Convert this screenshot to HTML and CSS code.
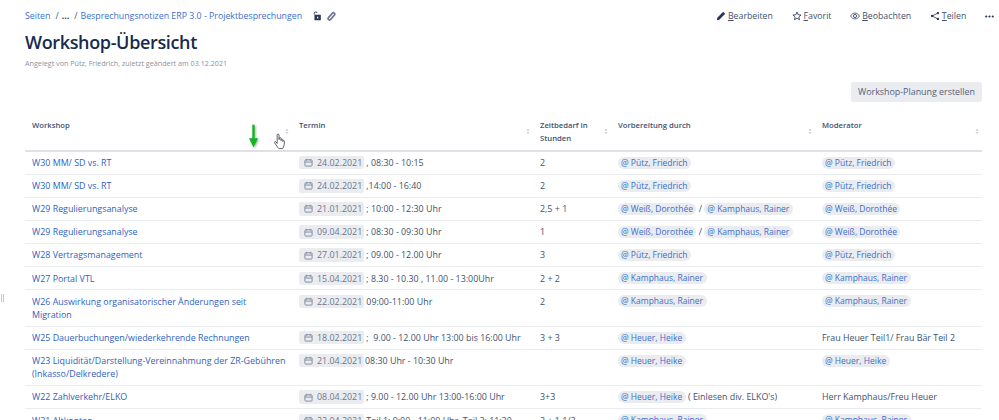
FILE: index.html
```html
<!DOCTYPE html>
<html lang="de">
<head>
<meta charset="utf-8">
<title>Workshop-Übersicht</title>
<link rel="stylesheet" href="styles.css">
</head>
<body>
<svg class="sprites" width="0" height="0" aria-hidden="true">
  <symbol id="cal" viewBox="0 0 10 10"><rect x="1" y="2" width="8" height="7" rx="1" fill="none" stroke="currentColor"/><path d="M1 4.500h8M3 1v2M7 1v2" stroke="currentColor" fill="none"/></symbol>
  <symbol id="sort" viewBox="0 0 6 10"><path d="M3 1 5.200 4H.8zM3 9 .8 6h4.400z" fill="currentColor"/></symbol>
</svg>
<div class="page">
  <header class="top">
    <nav class="crumbs">
      <a>Seiten</a><span class="sep">/</span><span class="dots">...</span><span class="sep">/</span><a>Besprechungsnotizen ERP 3.0 - Projektbesprechungen</a>
      <svg class="ic lock" viewBox="0 0 10 11"><path d="M2 4V2.600a1.600 1.600 0 0 1 3.100-.5" fill="none" stroke="#253858" stroke-width="1.100"/><rect x="2.200" y="4.200" width="7" height="6" rx=".7" fill="#253858"/><rect x="5" y="6.300" width="1.400" height="1.800" fill="#fff"/></svg>
      <svg class="ic clip" viewBox="0 0 10 11"><path d="M2 7.500 6.600 2.200a1.600 1.600 0 0 1 2.400 2L4.600 9.200a1.500 1.500 0 0 1-2.500-1.800L6.200 3" fill="none" stroke="#6b778c" stroke-width="1.800"/></svg>
    </nav>
    <div class="actions">
      <span class="act"><svg class="ic" viewBox="0 0 12 12"><path d="M1 11l.6-3L8 1.600a1 1 0 0 1 1.400 0l1 1a1 1 0 0 1 0 1.400L4 10.400z" fill="#253858"/></svg><span><u>B</u>earbeiten</span></span>
      <span class="act"><svg class="ic" viewBox="0 0 12 12"><path d="M6 1.300 7.400 4.500l3.500.3-2.700 2.300.8 3.400L6 8.700l-3 1.800.8-3.400L1.100 4.800l3.500-.3z" fill="none" stroke="#253858"/></svg><span><u>F</u>avorit</span></span>
      <span class="act"><svg class="ic" viewBox="0 0 12 12"><path d="M.7 6C2 3.700 3.900 2.500 6 2.500S10 3.700 11.300 6C10 8.300 8.100 9.500 6 9.500S2 8.300.7 6z" fill="none" stroke="#253858" stroke-width=".9"/><circle cx="6" cy="6" r="1.900" fill="none" stroke="#253858"/></svg><span><u>B</u>eobachten</span></span>
      <span class="act"><svg class="ic" viewBox="0 0 12 12"><path d="M9.500 2.500 2.500 6l7 3.500" fill="none" stroke="#253858"/><circle cx="9.500" cy="2.500" r="1.400" fill="#253858"/><circle cx="2.500" cy="6" r="1.400" fill="#253858"/><circle cx="9.500" cy="9.500" r="1.400" fill="#253858"/></svg><span><u>T</u>eilen</span></span>
      <svg class="more" viewBox="0 0 9 3"><circle cx="1.200" cy="1.500" r="1.100"/><circle cx="4.500" cy="1.500" r="1.100"/><circle cx="7.800" cy="1.500" r="1.100"/></svg>
    </div>
  </header>
  <h1 class="title">Workshop-Übersicht</h1>
  <p class="meta">Angelegt von Pütz, Friedrich, zuletzt geändert am 03.12.2021</p>
  <div class="tools"><button class="btn">Workshop-Planung erstellen</button></div>
  <table class="grid">
    <colgroup><col class="c1"><col class="c2"><col class="c3"><col class="c4"><col class="c5"></colgroup>
    <thead>
      <tr>
        <th>Workshop<svg class="sort"><use href="#sort"/></svg>
          <svg class="arrow" viewBox="0 0 10 26"><path d="M3.700 0h2.600v15H10l-5 10L0 15h3.700z" fill="#12b51f"/></svg>
          <svg class="hand" viewBox="0 0 14 18"><path d="M4 9V2.200a1 1 0 0 1 2 0V7l.3-1.300a.9.9 0 0 1 1.800.1V8l.2-1a.9.9 0 0 1 1.700.2V9l.2-.6a.8.8 0 0 1 1.500.3c0 2.300-.2 4.500-1 6.300-.3.800-.8 1.500-1.500 1.500H6.500c-.9 0-1.400-.6-2-1.500L1.300 10.500c-.5-1 .6-1.900 1.500-1L4 11z" fill="#fff" stroke="#42464d" stroke-width=".9"/></svg>
        </th>
        <th>Termin<svg class="sort"><use href="#sort"/></svg></th>
        <th>Zeitbedarf in Stunden<svg class="sort"><use href="#sort"/></svg></th>
        <th>Vorbereitung durch<svg class="sort"><use href="#sort"/></svg></th>
        <th>Moderator<svg class="sort"><use href="#sort"/></svg></th>
      </tr>
    </thead>
    <tbody>
      <tr><td><a>W30 MM/ SD vs. RT</a></td><td><span class="date"><svg><use href="#cal"/></svg>24.02.2021</span> , 08:30 - 10:15</td><td>2</td><td><span class="pill">@ Pütz, Friedrich</span></td><td><span class="pill">@ Pütz, Friedrich</span></td></tr>
      <tr><td><a>W30 MM/ SD vs. RT</a></td><td><span class="date"><svg><use href="#cal"/></svg>24.02.2021</span> ,14:00 - 16:40</td><td>2</td><td><span class="pill">@ Pütz, Friedrich</span></td><td><span class="pill">@ Pütz, Friedrich</span></td></tr>
      <tr><td><a>W29 Regulierungsanalyse</a></td><td><span class="date"><svg><use href="#cal"/></svg>21.01.2021</span> ; 10:00 - 12:30 Uhr</td><td>2,5 + 1</td><td><span class="pill">@ Weiß, Dorothée</span> / <span class="pill">@ Kamphaus, Rainer</span></td><td><span class="pill">@ Weiß, Dorothée</span></td></tr>
      <tr><td><a>W29 Regulierungsanalyse</a></td><td><span class="date"><svg><use href="#cal"/></svg>09.04.2021</span> ; 08:30 - 09:30 Uhr</td><td>1</td><td><span class="pill">@ Weiß, Dorothée</span> / <span class="pill">@ Kamphaus, Rainer</span></td><td><span class="pill">@ Weiß, Dorothée</span></td></tr>
      <tr><td><a>W28 Vertragsmanagement</a></td><td><span class="date"><svg><use href="#cal"/></svg>27.01.2021</span> ; 09.00 - 12.00 Uhr</td><td>3</td><td><span class="pill">@ Pütz, Friedrich</span></td><td><span class="pill">@ Pütz, Friedrich</span></td></tr>
      <tr><td><a>W27 Portal VTL</a></td><td><span class="date"><svg><use href="#cal"/></svg>15.04.2021</span> ; 8.30 - 10.30 , 11.00 - 13:00Uhr</td><td>2 + 2</td><td><span class="pill">@ Kamphaus, Rainer</span></td><td><span class="pill">@ Kamphaus, Rainer</span></td></tr>
      <tr><td><a>W26 Auswirkung organisatorischer Änderungen seit<br>Migration</a></td><td><span class="date"><svg><use href="#cal"/></svg>22.02.2021</span> 09:00-11:00 Uhr</td><td>2</td><td><span class="pill">@ Kamphaus, Rainer</span></td><td><span class="pill">@ Kamphaus, Rainer</span></td></tr>
      <tr><td><a>W25 Dauerbuchungen/wiederkehrende Rechnungen</a></td><td><span class="date"><svg><use href="#cal"/></svg>18.02.2021</span> ;&nbsp; 9.00 - 12.00 Uhr 13:00 bis 16:00 Uhr</td><td>3 + 3</td><td><span class="pill">@ Heuer, Heike</span></td><td>Frau Heuer Teil1/ Frau Bär Teil 2</td></tr>
      <tr><td><a>W23 Liquidität/Darstellung-Vereinnahmung der ZR-Gebühren<br>(Inkasso/Delkredere)</a></td><td><span class="date"><svg><use href="#cal"/></svg>21.04.2021</span><span class="tight">08:30 Uhr - 10:30 Uhr</span></td><td></td><td><span class="pill">@ Heuer, Heike</span></td><td><span class="pill">@ Heuer, Heike</span></td></tr>
      <tr><td><a>W22 Zahlverkehr/ELKO</a></td><td><span class="date"><svg><use href="#cal"/></svg>08.04.2021</span> ; 9.00 - 12.00 Uhr 13:00-16:00 Uhr</td><td>3+3</td><td><span class="pill">@ Heuer, Heike</span> ( Einlesen div. ELKO's)</td><td>Herr Kamphaus/Freu Heuer</td></tr>
      <tr><td><a>W21 Altkonten</a></td><td><span class="date"><svg><use href="#cal"/></svg>22.04.2021</span> Teil 1: 9:00 - 11:00 Uhr, Teil 2: 11:30</td><td>2 + 1 1/2</td><td><span class="pill">@ Kamphaus, Rainer</span></td><td><span class="pill">@ Kamphaus, Rainer</span></td></tr>
    </tbody>
  </table>
  <div class="handle"></div>
</div>
</body>
</html>
```

FILE: styles.css
```css
* { box-sizing: border-box; }
html, body { margin: 0; padding: 0; background: #fff; }
.sprites { position: absolute; }
.page {
  position: relative;
  width: 999px;
  height: 420px;
  overflow: hidden;
  padding: 0 17px 0 25px;
  font-family: "Open Sans", "Noto Sans", sans-serif;
  font-size: 8.900px;
  line-height: 13.300px;
  color: #42526e;
}
a { color: #2f62c0; }
.top { display: flex; justify-content: space-between; align-items: center; height: 17px; margin-top: 8px; }
.crumbs { display: flex; align-items: center; font-size: 8.800px; }
.crumbs a { color: #3c6fc9; }
.sep { margin: 0 3px 0 5px; color: #42526e; }
.dots { color: #253858; font-weight: 700; }
.ic { width: 10px; height: 10px; flex: none; }
.lock { margin-left: 10px; }
.clip { margin-left: 4px; }
.actions { display: flex; align-items: center; gap: 18.700px; margin-right: -12px; font-size: 8.750px; color: #42526e; }
.act { display: flex; align-items: center; gap: 2px; }
.more { width: 9px; height: 3px; fill: #253858; }
.title { margin: 4px 0 0; font-size: 18px; line-height: 26px; font-weight: 600; letter-spacing: -.35px; color: #172b4d; }
.meta { margin: 3px 0 0; font-size: 7.200px; line-height: 10px; color: #8a93a3; }
.tools { display: flex; justify-content: flex-end; margin-top: 14px; }
.btn {
  height: 19.500px;
  width: 131px;
  padding: 0;
  border: 0;
  border-radius: 2px;
  background: #ebecf0;
  color: #505f79;
  font: 8.900px "Open Sans", "Noto Sans", sans-serif;
}
.grid { width: 957px; margin-top: 12.500px; border-collapse: collapse; table-layout: fixed; }
.c1 { width: 267px; }
.c2 { width: 241px; }
.c3 { width: 78px; }
.c4 { width: 204px; }
.c5 { width: 167px; }
th {
  position: relative;
  height: 36px;
  padding: 4.600px 14px 4.600px 7px;
  border-bottom: 2px solid #dfe1e6;
  text-align: left;
  vertical-align: top;
  font-size: 7.700px;
  font-weight: 600;
  color: #42526e;
}
.sort { position: absolute; right: 3px; top: 14px; width: 4px; height: 7px; color: #c1c7d0; }
.arrow { position: absolute; left: 224px; top: 10px; width: 9px; height: 25px; filter: drop-shadow(1px 1px 1px #9aa); }
.hand { position: absolute; left: 248px; top: 19px; width: 14px; height: 17px; }
td {
  padding: 4.400px 7px;
  border-bottom: 1px solid #ebecf0;
  vertical-align: top;
}
td:first-child { padding-right: 0; white-space: nowrap; }
td:nth-child(2) { white-space: nowrap; }
.date {
  display: inline-flex;
  vertical-align: top;
  align-items: center;
  gap: 4px;
  width: 65px;
  height: 13.300px;
  padding-left: 5px;
  border-radius: 2px;
  background: #ebecf0;
  color: #6b778c;
}
.date svg { width: 9px; height: 9px; color: #7a869a; }
.tight { margin-left: 1px; }
.pill {
  display: inline-block;
  vertical-align: top;
  height: 12px;
  margin-top: .7px;
  margin-left: -.5px;
  padding: 0 3.500px;
  font-size: 8.500px;
  line-height: 12px;
  border-radius: 6px;
  background: #ebecf0;
  color: #3c6fc9;
}
.handle { position: absolute; left: 1px; top: 294px; width: 3px; height: 8px; border-left: 1px solid #c1c7d0; border-right: 1px solid #c1c7d0; }
```
